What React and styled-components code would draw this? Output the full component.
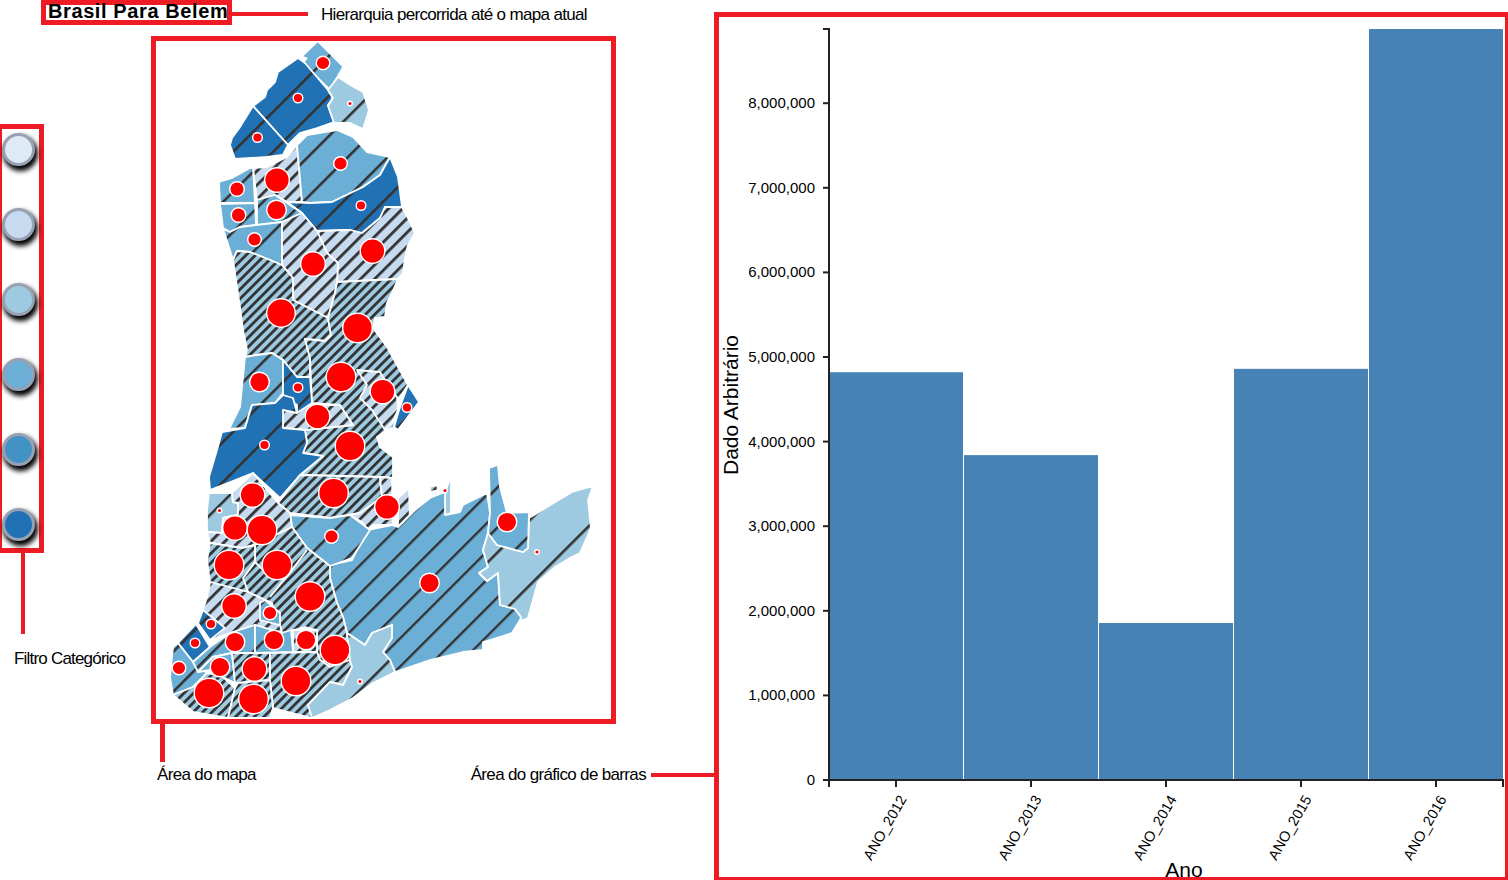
import React from 'react'
import styled, {createGlobalStyle} from 'styled-components'

const RED = '#ed1c24'
const FILTERS = ['#deebf7', '#c6dbef', '#9ecae1', '#6baed6', '#4292c6', '#2171b5']

const DARK = '#2171b5'
const MID = '#6baed6'
const LIGHT = '#9ecae1'
const PALE = '#c6dbef'

// spacing measured along x+y, phase is one x+y value a line goes through
const HATCHES = {
  dense: {spacing: 9.4, phase: 3, width: 2.8},
  medium: {spacing: 14.1, phase: 5, width: 2.8},
  s28: {spacing: 28.28, phase: 1066.7, width: 2.4},
  s40: {spacing: 40, phase: 385, width: 2.6},
  s65: {spacing: 65, phase: 1050, width: 2.6},
}

// drawn in order, later ones sit over earlier ones
const REGIONS = [
  [MID, 's40', '317.7,41 343.3,66.7 330,90 302.7,63.3 306.7,58.3 301.7,56.7'],
  [DARK, 's40', '298,58 305,63 328,90 332.7,98 328,105 334,122 317,128 300,133 288,145 253,106 265,97 267,90 275,82 278,72'],
  [DARK, 's40', '253,106 288,145 283,155 267,157 235,159 230,145 232,138 240,127 243,122'],
  [LIGHT, 's65', '338,77 352,86 363,92 369,110 363,129 350,123 334,123 328,106 333,98 328,90'],
  [PALE, 'medium', '297,145 302,202 287,202 275,195 257,200 253,168 267,167 287,157'],
  [MID, 's40', '297,145 307,135 337,130 353,137 367,152 390,157 380,175 363,187 332,202 310,203 302,202'],
  [DARK, 's40', '390,157 398,177 402,207 385,207 380,218 362,233 350,230 317,231 302,213 287,202 310,203 332,202 363,187 380,175'],
  [MID, 's40', '219,182 232,178 250,168 253,168 255,203 220,203'],
  [MID, 's40', '220,204 255,203 256,225 240,227 230,232 223,228'],
  [MID, 's40', '257,200 275,195 302,213 282,222 257,225'],
  [MID, 's40', '223,229 230,232 240,227 282,222 282,265 270,260 250,252 237,251 233,260 226,238'],
  [PALE, 'medium', '317,231 350,230 362,233 380,218 385,207 402,207 409,220 415,233 408,245 405,258 403,273 398,279 337,282 338,263 327,253'],
  [PALE, 'medium', '282,222 302,213 317,231 327,253 338,263 337,282 335,293 328,318 293,300 293,278 282,265'],
  [LIGHT, 'dense', '233,260 237,251 250,252 270,260 282,265 293,278 293,300 328,318 331,335 325,341 305,339 310,358 310,378 297,377 283,360 272,353 257,355 245,357 247,350 243,330 240,307'],
  [LIGHT, 'dense', '337,282 398,279 392,293 387,303 385,317 375,318 373,328 387,347 408,385 398,400 394,427 387,430 377,437 380,447 393,457 393,478 380,477 300,475 323,456 303,453 307,443 305,430 353,425 340,405 312,403 310,358 305,339 325,341 331,335 328,318 335,293'],
  [PALE, 'medium', '357,370 380,372 387,383 397,397 398,410 392,423 385,430 372,410 360,398 367,385'],
  [PALE, 'medium', '283,410 297,410 303,405 340,405 353,425 305,430 283,428'],
  [DARK, 's40', '408,385 419,402 413,410 398,430 394,427 400,407'],
  [MID, 's40', '245,357 257,355 272,353 283,360 283,393 275,403 252,405 245,428 229,429 240,407 243,377'],
  [DARK, 's40', '283,360 297,377 310,377 312,403 297,413 297,405 283,395'],
  [DARK, 's40', '245,428 252,405 275,403 283,395 293,398 297,413 283,410 283,428 305,430 307,443 303,453 323,456 300,475 280,498 253,473 210,490 209,477 217,450 222,432'],
  [LIGHT, 'dense', '300,475 380,477 382,497 360,513 330,518 290,513 278,503'],
  [PALE, 'medium', '380,477 392,478 393,525 373,525 368,530 362,522 350,515 360,513 382,497'],
  [PALE, 'medium', '409,488 410,525 402,528 398,525 398,498'],
  [LIGHT, 'dense', '430,492 430,487 437,485 438,490'],
  [LIGHT, 's65', '451,477 451,513 445,515 445,492'],
  [MID, 's28', '330,565 352,560 367,530 392,525 398,527 415,510 430,498 445,492 445,515 460,512 463,505 487,493 490,513 488,533 483,550 488,567 479,573 487,581 498,573 500,605 515,609 521,617 520,620 512,633 490,640 483,642 483,650 463,652 430,660 395,672 390,660 383,652 392,638 392,625 372,633 365,645 347,633 343,617 337,603 330,578'],
  [LIGHT, 's65', '488,533 497,545 523,552 528,548 529,518 547,507 572,492 593,486 588,500 591,528 580,553 570,558 555,567 538,582 528,618 521,621 521,617 515,609 500,605 498,573 487,581 479,573 488,567 483,550'],
  [MID, 's40', '489,468 498,465 500,487 507,513 529,512 528,548 523,552 497,545 488,533 490,513'],
  [MID, 's40', '290,515 330,518 350,515 370,530 352,558 330,566 307,548 292,527'],
  [LIGHT, 's65', '209,493 232,493 233,502 238,503 238,515 223,518 222,533 207,532 207,510'],
  [PALE, 'medium', '232,493 253,473 278,503 290,513 292,527 280,533 255,545 242,548 210,543 207,532 222,533 223,518 238,515 238,503 233,502'],
  [LIGHT, 'dense', '255,545 280,533 292,527 307,548 330,566 330,578 337,603 343,617 347,633 350,660 330,667 320,660 317,652 317,630 305,627 282,633 272,603 248,592 243,578 255,562'],
  [LIGHT, 'dense', '210,543 242,548 255,545 255,562 243,578 248,592 210,582 207,560'],
  [PALE, 'medium', '210,582 248,592 272,603 260,603 260,620 280,625 282,633 255,625 230,633 210,640 198,623 203,610 207,597'],
  [MID, 's40', '260,603 265,600 280,613 280,625 260,620'],
  [DARK, 's40', '203,610 225,628 210,640 198,623'],
  [DARK, 's40', '196,624 210,647 193,662 178,643'],
  [MID, 's40', '173,647 178,643 193,662 207,673 193,687 173,695 170,677'],
  [MID, 's40', '210,647 230,633 255,625 255,653 232,653 213,657 198,672 193,662'],
  [MID, 's40', '255,625 282,633 291,630 293,652 255,653'],
  [PALE, 'medium', '293,630 317,630 317,652 293,652'],
  [MID, 's40', '213,657 232,653 235,683 223,677 210,670 198,672'],
  [LIGHT, 'dense', '173,695 193,687 207,673 223,677 235,688 228,718 193,712'],
  [LIGHT, 'dense', '232,653 270,653 270,680 238,683 235,683'],
  [LIGHT, 'dense', '270,653 317,652 320,660 330,667 350,660 352,667 343,685 330,682 310,703 312,718 273,708 270,680'],
  [LIGHT, 'dense', '238,683 270,680 273,708 270,718 228,718 235,688'],
  [LIGHT, 's65', '347,633 365,645 372,633 392,625 392,638 383,652 390,660 395,672 373,683 353,698 330,710 312,718 308,705 330,682 343,685 352,667 350,660'],
]

const INNER_LINES = ['307,550 288,575 270,597', '255,562 268,575']

const CIRCLES = [
  [323, 63, 7.5], [298, 98, 5.5], [350, 103.5, 3], [257.5, 137.5, 5.5], [340.5, 163.5, 7.5],
  [277, 180, 13], [237, 189, 8], [276.5, 210, 10.5], [238.5, 215, 8], [361, 205.5, 5.5],
  [254.5, 239.5, 7.5], [372.5, 251, 13], [313, 264, 13], [281, 313, 15], [357.5, 328, 15.5],
  [259.5, 382, 10.5], [298, 387.5, 5.5], [341, 377, 15.5], [382.5, 391.5, 13], [407, 407.5, 5.5],
  [317.5, 416.5, 13], [264.5, 445, 5.5], [350, 446, 15.5], [333.5, 493, 15.5], [252.5, 495, 13],
  [387, 507, 13], [445, 490.5, 3], [507, 522, 10.5], [219.5, 510.5, 3], [235, 528, 13],
  [262, 530, 15.5], [331.5, 536.5, 7.5], [537, 552, 3], [229, 565, 15.5], [277, 565, 15.5],
  [429.5, 583, 10.5], [310, 596.5, 15.5], [234, 606, 13], [270, 613, 7.5], [211, 624, 5.5],
  [195, 643, 5.5], [235, 642, 10.5], [274, 640, 10.5], [306, 640, 10.5], [335, 650, 15.5],
  [179, 668, 7.5], [220, 667, 10.5], [254.5, 669, 13], [296, 681, 15.5], [209, 693, 15.5],
  [253.5, 699, 15.5], [360, 681.5, 3],
]

const BARS = [
  {name: 'ANO_2012', value: 4820000},
  {name: 'ANO_2013', value: 3840000},
  {name: 'ANO_2014', value: 1856000},
  {name: 'ANO_2015', value: 4860000},
  {name: 'ANO_2016', value: 8877000},
]
const Y_TICKS = [0, 1, 2, 3, 4, 5, 6, 7, 8]
const PER_MILLION = 84.6
const BASE_Y = 780
const LEFT_X = 829
const STEP = 135

function MapDrawing() {
  return (
    <MapSvg viewBox="156 41 455 678">
      <defs>
        {Object.entries(HATCHES).map(([key, h]) => {
          const tile = h.spacing / Math.SQRT2
          return (
            <pattern key={key} id={'hatch-' + key} patternUnits="userSpaceOnUse"
              width={tile} height={tile} x={h.phase / Math.SQRT2 - h.width / 2} patternTransform="rotate(45)">
              <rect width={h.width} height={tile} fill="#333" />
            </pattern>
          )
        })}
      </defs>
      {REGIONS.map(([fill, hatch, points], i) => (
        <g key={i}>
          <polygon points={points} fill={fill} />
          <polygon points={points} fill={'url(#hatch-' + hatch + ')'} stroke="#fff" strokeWidth="1.8" strokeLinejoin="round" />
        </g>
      ))}
      {INNER_LINES.map((points) => (
        <polyline key={points} points={points} fill="none" stroke="#fff" strokeWidth="1.8" />
      ))}
      {CIRCLES.map(([cx, cy, r], i) => (
        <circle key={i} cx={cx} cy={cy} r={r - 0.7} fill="#f00" stroke="#fff" strokeWidth="1.4" />
      ))}
    </MapSvg>
  )
}

function BarChart() {
  return (
    <ChartSvg viewBox="719 17 791 865">
      {BARS.map((bar, i) => {
        const height = (bar.value / 1000000) * PER_MILLION
        return <rect key={bar.name} x={LEFT_X + i * STEP} y={BASE_Y - height} width={STEP - 1} height={height} fill="steelblue" />
      })}
      <path d={`M823 29H829V${BASE_Y}`} fill="none" stroke="#222" strokeWidth="2" />
      <path d={`M829 787V${BASE_Y}H1503V787`} fill="none" stroke="#222" strokeWidth="2" />
      {Y_TICKS.map((tick) => {
        const y = BASE_Y - tick * PER_MILLION
        return (
          <g key={tick}>
            <line x1="823" x2="829" y1={y} y2={y} stroke="#222" strokeWidth="2" />
            <TickText x="815" y={y + 5} textAnchor="end">
              {tick === 0 ? '0' : tick + ',000,000'}
            </TickText>
          </g>
        )
      })}
      {BARS.map((bar, i) => {
        const x = LEFT_X + i * STEP + 67
        return (
          <g key={bar.name}>
            <line x1={x} x2={x} y1={BASE_Y} y2="787" stroke="#222" strokeWidth="2" />
            <SlantText transform={`translate(${x + 11} 799) rotate(-60)`} textAnchor="end">{bar.name}</SlantText>
          </g>
        )
      })}
      <AxisTitle transform="translate(738 405) rotate(-90)" textAnchor="middle">Dado Arbitrário</AxisTitle>
      <AxisTitle x="1184" y="877" textAnchor="middle">Ano</AxisTitle>
    </ChartSvg>
  )
}

function App() {
  return (
    <Page>
      <GlobalStyle />
      <LeftPane>
        <TitleRow>
          <TitleBox>Brasil Para Belem</TitleBox>
          <TitleRule />
          <TitleNote>Hierarquia percorrida até o mapa atual</TitleNote>
        </TitleRow>
        <Body>
          <FilterColumn>
            <FilterBox>
              {FILTERS.map((color) => <FilterDot key={color} $color={color} />)}
            </FilterBox>
            <FilterRule />
            <FilterNote>Filtro Categórico</FilterNote>
          </FilterColumn>
          <MapColumn>
            <MapBox>
              <MapDrawing />
            </MapBox>
            <MapRule />
            <Notes>
              <Note>Área do mapa</Note>
              <ChartNote>
                <Note>Área do gráfico de barras</Note>
                <ChartRule />
              </ChartNote>
            </Notes>
          </MapColumn>
        </Body>
      </LeftPane>
      <ChartBox>
        <BarChart />
      </ChartBox>
    </Page>
  )
}

const GlobalStyle = createGlobalStyle`
  html, body {
    margin: 0;
    padding: 0;
    background: #fff;
    overflow: hidden;
  }
`

const Page = styled.div`
  display: flex;
  width: 1508px;
  height: 880px;
  overflow: hidden;
  background: #fff;
  color: #000;
  font-family: "Liberation Sans", Arial, sans-serif;
`

const LeftPane = styled.div`
  width: 714px;
  flex-shrink: 0;
  display: flex;
  flex-direction: column;
`

const TitleRow = styled.div`
  display: flex;
  align-items: center;
  height: 25px;
  padding-left: 41px;
  margin-bottom: 11px;
`

const TitleBox = styled.div`
  box-sizing: border-box;
  width: 191px;
  height: 25px;
  border: 5px solid ${RED};
  padding-left: 2px;
  font-size: 20px;
  font-weight: 700;
  line-height: 13px;
  letter-spacing: 0.6px;
  white-space: nowrap;
`

const TitleRule = styled.div`
  width: 76px;
  height: 4px;
  margin-top: 3px;
  background: ${RED};
`

const Note = styled.div`
  font-size: 17px;
  line-height: 20px;
  letter-spacing: -0.66px;
  white-space: nowrap;
`

const TitleNote = styled(Note)`
  margin-left: 13px;
  margin-top: 5px;
`

const Body = styled.div`
  display: flex;
`

const FilterColumn = styled.div`
  width: 154px;
  margin-left: -3px;
  padding-top: 88px;
  flex-shrink: 0;
`

const FilterBox = styled.div`
  box-sizing: border-box;
  width: 47px;
  height: 429px;
  border: 5px solid ${RED};
  padding: 4px 0 0 0;
  display: flex;
  flex-direction: column;
  gap: 42px;
`

const FilterDot = styled.div`
  box-sizing: border-box;
  width: 33px;
  height: 33px;
  flex-shrink: 0;
  border-radius: 50%;
  border: 3.5px solid #98a1b1;
  background: ${(props) => props.$color};
  box-shadow: 2px 4px 5px 1px #000;
`

const FilterRule = styled.div`
  width: 4px;
  height: 81px;
  margin-left: 24px;
  background: ${RED};
`

const FilterNote = styled(Note)`
  margin: 15px 0 0 17px;
  letter-spacing: -0.8px;
`

const MapColumn = styled.div`
  flex: 1;
  display: flex;
  flex-direction: column;
`

const MapBox = styled.div`
  box-sizing: border-box;
  width: 465px;
  height: 688px;
  flex-shrink: 0;
  border: 5px solid ${RED};
`

const MapSvg = styled.svg`
  display: block;
  width: 455px;
  height: 678px;
`

const MapRule = styled.div`
  width: 5px;
  height: 38px;
  margin-left: 9px;
  background: ${RED};
`

const Notes = styled.div`
  display: flex;
  justify-content: space-between;
  margin: 3px 0 0 6px;
`

const ChartNote = styled.div`
  display: flex;
  align-items: center;
  gap: 5px;
`

const ChartRule = styled.div`
  width: 63px;
  height: 4px;
  background: ${RED};
`

const ChartBox = styled.div`
  box-sizing: border-box;
  width: 796px;
  height: 870px;
  margin-top: 12px;
  flex-shrink: 0;
  border: 5px solid ${RED};
`

const ChartSvg = styled.svg`
  display: block;
  width: 791px;
  height: 865px;
  font-family: "Liberation Sans", Arial, sans-serif;
`

const TickText = styled.text`
  font-size: 15px;
  fill: #000;
`

const SlantText = styled.text`
  font-size: 14.5px;
  fill: #000;
`

const AxisTitle = styled.text`
  font-size: 21px;
  fill: #000;
`

export default App
